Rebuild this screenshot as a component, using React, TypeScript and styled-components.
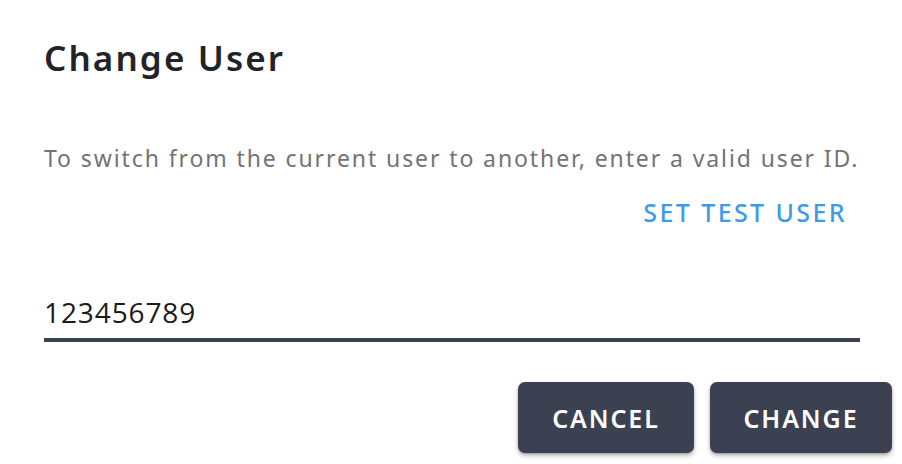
import React from "react";
import styled, { createGlobalStyle } from "styled-components";

const Global = createGlobalStyle`
  html, body { margin: 0; padding: 0; background: #ffffff; }
  body { font-family: "Noto Sans", "Open Sans", sans-serif; }
`;

const Dialog = styled.div`
  width: 902px;
  height: 464px;
  box-sizing: border-box;
  padding: 28px 10px 0 44px;
  display: flex;
  flex-direction: column;
  background: #fff;
`;

const Title = styled.h2`
  margin: 0;
  height: 60px;
  line-height: 60px;
  font-size: 35px;
  font-weight: 600;
  color: #222327;
  letter-spacing: 2.1px;
`;

const Content = styled.div`
  padding-right: 32px;
  display: flex;
  flex-direction: column;
`;

const Description = styled.p`
  margin: 52px 0 0 0;
  line-height: 36px;
  font-size: 23px;
  color: #737373;
  letter-spacing: 1.9px;
  white-space: nowrap;
`;

const LinkRow = styled.div`
  display: flex;
  justify-content: flex-end;
  margin-top: 16px;
  padding-right: 15px;
`;

const LinkButton = styled.button`
  border: none;
  background: none;
  padding: 0;
  height: 40px;
  font-family: inherit;
  font-size: 25px;
  font-weight: 500;
  color: #3d9be9;
  letter-spacing: 2.4px;
  margin-right: -2px;
  cursor: pointer;
`;

const Input = styled.input`
  margin-top: 60px;
  border: none;
  border-bottom: 4px solid #3c4150;
  outline: none;
  padding: 0 0 6px 0;
  height: 40px;
  font-family: "Open Sans", sans-serif;
  font-size: 28px;
  color: #1b1b1b;
  letter-spacing: 0.9px;
  background: transparent;
`;

const Actions = styled.div`
  display: flex;
  justify-content: flex-end;
  gap: 16px;
  margin-top: 40px;
`;

const ActionButton = styled.button<{ $w: number }>`
  width: ${(p) => p.$w}px;
  height: 71px;
  border: none;
  border-radius: 7px;
  background: #3c4151;
  color: #fff;
  font-family: inherit;
  font-size: 25px;
  font-weight: 600;
  letter-spacing: 1.9px;
  box-shadow: 0 3px 5px rgba(0,0,0,0.25), 0 1px 2px rgba(0,0,0,0.2);
  cursor: pointer;
`;

export default function App() {
  return (
    <>
      <Global />
      <Dialog>
        <Title>Change User</Title>
        <Content>
          <Description>
            To switch from the current user to another, enter a valid user ID.
          </Description>
          <LinkRow>
            <LinkButton>SET TEST USER</LinkButton>
          </LinkRow>
          <Input defaultValue="123456789" />
        </Content>
        <Actions>
          <ActionButton $w={176}>CANCEL</ActionButton>
          <ActionButton $w={182}>CHANGE</ActionButton>
        </Actions>
      </Dialog>
    </>
  );
}
